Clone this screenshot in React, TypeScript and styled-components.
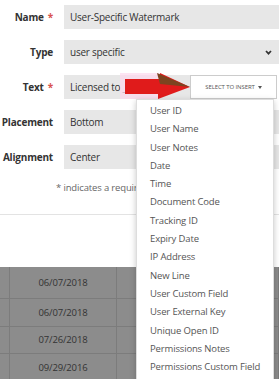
import styled, { createGlobalStyle } from "styled-components";

const GlobalStyle = createGlobalStyle`
  html, body {
    margin: 0;
    padding: 0;
    background: #fff;
  }
  body {
    font-family: "Open Sans", "Noto Sans", sans-serif;
  }
`;

const Page = styled.div`
  position: relative;
  width: 279px;
  height: 379px;
  overflow: hidden;
  background: #fff;
`;

const Form = styled.div`
  display: flex;
  flex-direction: column;
  gap: 11px;
  padding: 5px 0 0 0;
`;

const Row = styled.div`
  display: flex;
  align-items: center;
  gap: 11px;
  height: 24px;
`;

const Group = styled.div`
  display: flex;
  flex: 1;
  height: 24px;
`;

const Label = styled.div`
  width: 53px;
  flex-shrink: 0;
  text-align: right;
  font-size: 10px;
  letter-spacing: -0.2px;
  font-weight: 700;
  color: #333;
  white-space: nowrap;
`;

const Req = styled.span`
  color: #d9534f;
  margin-left: 4px;
  font-weight: 700;
`;

const Field = styled.div<{ $width?: number }>`
  display: flex;
  align-items: center;
  justify-content: space-between;
  height: 24px;
  width: ${(p) => (p.$width ? `${p.$width}px` : "auto")};
  flex: ${(p) => (p.$width ? "none" : "1")};
  box-sizing: border-box;
  padding: 0 7px 0 6px;
  background: #e7e7e7;
  font-size: 10px;
  letter-spacing: -0.25px;
  color: #333;
  white-space: nowrap;
`;

const Chevron = styled.svg`
  width: 7px;
  height: 5px;
`;

const InsertButton = styled.div`
  height: 24px;
  width: 87px;
  box-sizing: border-box;
  border: 1px solid #ccc;
  background: #fff;
  display: flex;
  align-items: center;
  justify-content: center;
  gap: 3px;
  font-size: 6px;
  color: #555;
  letter-spacing: -0.1px;
`;

const Caret = styled.span`
  width: 0;
  height: 0;
  border-left: 2.5px solid transparent;
  border-right: 2.5px solid transparent;
  border-top: 3px solid #555;
`;

const Note = styled.div`
  margin: 12px 0 0 56px;
  width: 80px;
  overflow: hidden;
  white-space: nowrap;
  font-size: 9.5px;
  letter-spacing: -0.15px;
  color: #666;
`;

const Divider = styled.div`
  margin-top: 20px;
  height: 1px;
  background: #e3e3e3;
`;

const Table = styled.div`
  margin-top: 52px;
  background: #8c8c8c;
`;

const TableRow = styled.div<{ $tall?: boolean }>`
  display: grid;
  grid-template-columns: 10px 107px 1fr;
  height: ${(p) => (p.$tall ? "32px" : "27.5px")};
  box-sizing: border-box;
  border-bottom: 1px solid #7c7c7c;
`;

const Cell = styled.div`
  display: flex;
  align-items: center;
  justify-content: center;
  font-size: 9.5px;
  letter-spacing: -0.15px;
  color: #333;
  border-right: 1px solid #7c7c7c;
`;

const Menu = styled.ul`
  position: absolute;
  left: 136px;
  top: 99px;
  width: 138px;
  margin: 0;
  padding: 2px 0 10px;
  list-style: none;
  background: #fff;
  box-shadow: 0 2px 6px rgba(0, 0, 0, 0.22);
  border: 1px solid #ddd;
  box-sizing: border-box;
`;

const MenuItem = styled.li`
  height: 18.3px;
  line-height: 18.3px;
  padding-left: 13px;
  font-size: 9.5px;
  letter-spacing: -0.15px;
  color: #555;
  white-space: nowrap;
`;

const Arrow = styled.svg`
  position: absolute;
  left: 120px;
  top: 70px;
  width: 72px;
  height: 30px;
`;

const items = [
  "User ID",
  "User Name",
  "User Notes",
  "Date",
  "Time",
  "Document Code",
  "Tracking ID",
  "Expiry Date",
  "IP Address",
  "New Line",
  "User Custom Field",
  "User External Key",
  "Unique Open ID",
  "Permissions Notes",
  "Permissions Custom Field",
];

const dates = ["06/07/2018", "06/07/2018", "07/26/2018", "09/29/2016"];

export default function App() {
  return (
    <Page>
      <GlobalStyle />
      <Form>
        <Row>
          <Label>
            Name<Req>*</Req>
          </Label>
          <Field>User-Specific Watermark</Field>
        </Row>
        <Row>
          <Label>Type</Label>
          <Field>
            user specific
            <Chevron viewBox="0 0 7 5">
              <path d="M1 1 L3.5 3.7 L6 1" fill="none" stroke="#333" strokeWidth="1.7" />
            </Chevron>
          </Field>
        </Row>
        <Row>
          <Label>
            Text<Req>*</Req>
          </Label>
          <Group>
            <Field $width={126}>Licensed to _</Field>
            <InsertButton>
              SELECT TO INSERT <Caret />
            </InsertButton>
          </Group>
        </Row>
        <Row>
          <Label>Placement</Label>
          <Field>Bottom</Field>
        </Row>
        <Row>
          <Label>Alignment</Label>
          <Field>Center</Field>
        </Row>
      </Form>
      <Note>* indicates a required field</Note>
      <Divider />
      <Table>
        {dates.map((d, i) => (
          <TableRow key={i} $tall={i === 0}>
            <Cell />
            <Cell>{d}</Cell>
            <Cell />
          </TableRow>
        ))}
      </Table>
      <Arrow viewBox="0 0 72 30">
        <rect x="0" y="3" width="40" height="26" fill="#fcd9ee" opacity="0.7" />
        <path d="M5 9 H40 V3 L70 17 L38 29 V24 H5 Z" fill="#e01b1b" />
        <path d="M37 3 L70 17 L40 14 Z" fill="#7c4420" />
      </Arrow>
      <Menu>
        {items.map((it) => (
          <MenuItem key={it}>{it}</MenuItem>
        ))}
      </Menu>
    </Page>
  );
}
